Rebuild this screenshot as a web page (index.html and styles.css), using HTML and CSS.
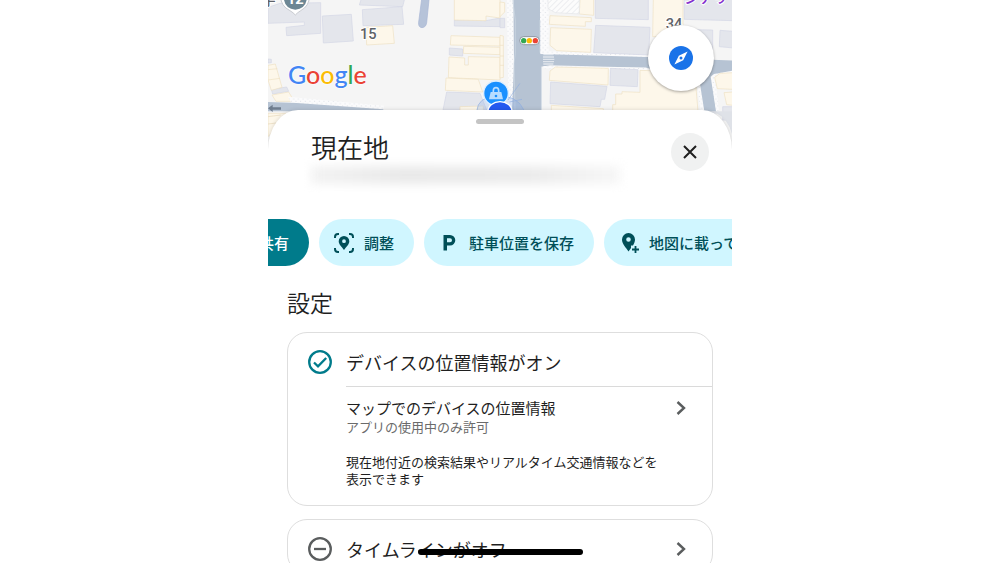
FILE: index.html
```html
<!DOCTYPE html>
<html lang="ja">
  <head>
    <meta charset="UTF-8">
    <meta name="viewport" content="width=device-width, initial-scale=1.0">
    <title>現在地</title>
    <link rel="stylesheet" href="styles.css">
  </head>
  <body>
    <div class="screen">
      <div class="map">
        <svg class="map-canvas" viewBox="0 0 1392 450" preserveAspectRatio="xMidYMin slice" aria-hidden="true">
          <defs>
            <pattern id="dots" width="14" height="14" patternUnits="userSpaceOnUse">
              <rect width="14" height="14" fill="#fbfbfc"/>
              <circle cx="3" cy="3" r="1.5" fill="#d3d7e0"/>
              <circle cx="10" cy="10" r="1.5" fill="#d3d7e0"/>
            </pattern>
            <pattern id="hatch" width="12" height="12" patternUnits="userSpaceOnUse" patternTransform="rotate(45)">
              <rect width="12" height="12" fill="#fcfcfc"/>
              <path d="M0 0V12" stroke="#dcdee4" stroke-width="3"/>
            </pattern>
          </defs>
          <rect width="1392" height="450" fill="#f5f5f5"/>

          <!-- 左側 -->
          <g transform="translate(-24 0)" stroke-width="2">
            <g fill="#e4e6ec" stroke="#d3d7e6">
              <path d="M24 22L60 10L182 8V100L80 107L78 82L133 76V66L24 70Z"/>
              <path d="M187 48L274 43L280 123L190 129Z"/>
              <path d="M304 -4H434L428 20L298 15Z"/>
              <path d="M307 29L426 20L431 73L309 77Z"/>
              <path d="M24 177L34 178V188L24 189Z"/>
              <path d="M34 268L80 261L86 274L38 282Z"/>
              <path d="M568 144L608 147V168L568 165Z"/>
              <path d="M583 60L678 62L720 54V80L583 78Z"/>
              <path d="M560 276L660 280L680 330H549Z"/>
            </g>
            <g fill="#fdf7ea" stroke="#efe1c2">
              <path d="M318 82L398 77L403 130L320 135Z"/>
              <path d="M583 -4H720V54L678 48V62L583 60Z"/>
              <path d="M573 107L720 112V138L571 135Z"/>
              <path d="M611 139L720 142V164L610 160Z"/>
              <path d="M567 171L614 174V195H625V170L720 172V240L565 233Z"/>
              <path d="M558 234L655 238L668 276L556 271Z"/>
              <path d="M24 196L46 192L66 262L34 271L24 240Z"/>
              <path d="M24 209L52 206M24 240L60 235" fill="none"/>
              <path d="M36 285L86 276L103 304L48 304Z"/>
              <path d="M600 320L670 318V334H600Z"/>
            </g>
            <path d="M84 290L372 317L370 330L94 309Z" fill="url(#dots)"/>
            <path d="M24 306L110 309L370 328V334H24Z" fill="#b6c3d3"/>
            <path d="M24 340H90L24 410Z" fill="#fdf7ea" stroke="#efe1c2"/>
            <path d="M24 350L62 345M24 372L48 369" stroke="#e6d7b8"/>
            <path d="M24 325L38 314V322H63V329H38V336Z" fill="#6f7d8e"/>
            <path d="M486 -10L476 66Q474 82 486 83Q498 82 500 68L508 -10Z" fill="#b6c3d9" stroke="#a8b5d4"/>
            <!-- 12番のピン -->
            <path d="M62 -10Q62 18 90 32Q100 38 106 45Q112 38 122 32Q148 18 148 -10Z" fill="#fff" stroke="#c8cbd0" stroke-width="3"/>
            <path d="M71 -10Q72 26 106 29Q140 26 141 -10Z" fill="#6d8794"/>
            <text x="106" y="11" class="pin-label">12</text>
            <text x="4" y="16" class="map-label map-label-jp">字</text>
            <text x="325" y="116" class="map-label">15</text>
          </g>

          <!-- 右側 -->
          <g transform="translate(696 0)" stroke-width="2">
            <path d="M20 -10H146V165L124 200V340H26Z" fill="url(#dots)"/>
            <path d="M40 -10H120V160H150L470 170V204L150 196L124 200V334H36L42 190Z" fill="#b6c3d3"/>
            <path d="M128 153L470 166V172L120 162ZM128 198L440 203V211L130 205Z" fill="url(#dots)"/>
            <path d="M440 172L700 182V212L634 230L650 340H612L592 230L440 204Z" fill="#b6c3d3"/>
            <path d="M590 250L600 252L613 334H602ZM632 230L642 222L697 212V218L646 236L657 334H648Z" fill="url(#dots)"/>
            <path d="M38 0L46 60V160L42 190L45 330M120 60V158M124 200V330" fill="none" stroke="#cfd9e4"/>
            <path d="M130 164H160M129 171H162M129 178H163M129 185H162M130 192H160" stroke="#e0e5ec" stroke-width="4"/>
            <g fill="#e4e6ec" stroke="#d3d7e6">
              <path d="M286 -4H445V59L286 55Z"/>
              <path d="M287 76L450 82L446 165L281 158Z"/>
              <path d="M553 -4H700V62L553 58Z"/>
              <path d="M520 88L638 90V150L520 148Z"/>
              <path d="M660 91L700 94V144L658 140Z"/>
              <path d="M332 205L414 209L412 260L330 256Z"/>
              <path d="M152 246L321 259L314 298H304L300 320L150 311Z"/>
              <path d="M0 55H14V83H0Z"/>
              <path d="M668 320H700V360H668Z"/>
            </g>
            <g fill="#fdf7ea" stroke="#efe1c2">
              <path d="M0 6L14 8V36L0 50ZM0 106L10 108V232L0 234Z"/>
              <path d="M0 136H10M0 168H12M0 196H12"/>
              <path d="M240 -4H281V46L238 42Z"/>
              <path d="M150 47L274 53V65H256V79L148 73Z"/>
              <path d="M152 83L274 88L272 157L170 152L150 136Z"/>
              <path d="M460 -4H549V110H458Z"/>
              <path d="M150 213L166 201L325 205L324 255L148 241Z"/>
              <path d="M420 211L540 215L586 240L594 334H338V314H347V282H366V275L420 277Z"/>
              <path d="M644 232L660 220L700 218V268L652 266Z"/>
              <path d="M672 278L700 276V316L680 314Z"/>
              <path d="M154 316L310 326V334H154Z"/>
            </g>
            <path d="M144 -4H238V42L166 38L144 26Z" fill="url(#hatch)" stroke="#e4e5e9"/>
            <path d="M600 334H700V420Q690 360 650 340Z" fill="#dfe2e8"/>
            <text x="522" y="87" class="map-label">34</text>
            <text x="640" y="8" class="map-label map-label-shop">シナリー</text>
            <!-- 信号機 -->
            <rect x="59" y="110" width="59" height="24" rx="12" fill="#fff" stroke="#6c7683" stroke-width="2"/>
            <circle cx="71" cy="122" r="8" fill="#34a853"/>
            <circle cx="88" cy="122" r="8" fill="#fbbc04"/>
            <circle cx="106" cy="122" r="8" fill="#ea4335"/>
            <!-- 現在地マーカー -->
            <path d="M-70 334Q-66 290 -14 290Q50 280 74 334Z" fill="#7aa5e8" fill-opacity=".25" stroke="#91afe0"/>
            <path d="M24 300L60 250M28 306L66 298" stroke="#91afe0" fill="none"/>
            <circle cx="-12" cy="280" r="37" fill="#1a90ff" stroke="#dfefff" stroke-width="4"/>
            <path d="M-28 276H4L9 298H-33Z" fill="#b7dcff"/>
            <path d="M-20 277V272Q-20 263 -12 263Q-4 263 -4 272V277" fill="none" stroke="#b7dcff" stroke-width="5"/>
            <circle cx="-12" cy="288" r="4" fill="#1a90ff"/>
            <ellipse cx="0" cy="334" rx="36" ry="29" fill="#2459f0" stroke="#fff" stroke-width="4"/>
          </g>
        </svg>
        <span class="logo"><span class="blue">G</span><span class="red">o</span><span class="yellow">o</span><span class="blue">g</span><span class="green">l</span><span class="red">e</span></span>
        <button class="compass" type="button" aria-label="コンパス">
          <svg width="24" height="24" viewBox="0 0 24 24">
            <circle cx="12" cy="12" r="12" fill="#1a73e8"/>
            <path d="M18.6 5.4L14.2 14.2L5.4 18.6L9.8 9.8Z" fill="#fff"/>
            <circle cx="12" cy="12" r="1.5" fill="#1a73e8"/>
          </svg>
        </button>
      </div>

      <main class="sheet">
        <div class="handle"></div>
        <header class="sheet-header">
          <div class="place">
            <h1>現在地</h1>
            <div class="address"></div>
          </div>
          <button class="close" type="button" aria-label="閉じる">
            <svg width="14" height="14" viewBox="0 0 14 14">
              <path d="M1 1L13 13M13 1L1 13" stroke="#1f1f1f" stroke-width="2"/>
            </svg>
          </button>
        </header>

        <div class="chips">
          <button class="chip chip-primary" type="button">
            <span class="chip-icon"></span>共有
          </button>
          <button class="chip" type="button">
            <svg class="chip-icon" viewBox="0 0 20 20">
              <path d="M1 5V4Q1 1 4 1H5M15 1H16Q19 1 19 4V5M19 15V16Q19 19 16 19H15M5 19H4Q1 19 1 16V15" fill="none" stroke="currentColor" stroke-width="2"/>
              <path fill-rule="evenodd" d="M10 3A5.300 5.300 0 0 0 4.700 8.300C4.700 11.500 8 14.200 10 17C12 14.200 15.300 11.500 15.300 8.300A5.300 5.300 0 0 0 10 3ZM10 6.300A1.900 1.900 0 1 1 10 10.100A1.900 1.900 0 1 1 10 6.300Z" fill="currentColor"/>
            </svg>
            調整
          </button>
          <button class="chip" type="button">
            <svg class="chip-icon" viewBox="0 0 20 20">
              <path fill-rule="evenodd" d="M4.500 2H11A5.300 5.300 0 0 1 11 12.600H8V17.500H4.500ZM8 5.300V9.300H11A2 2 0 0 0 11 5.300Z" fill="currentColor"/>
            </svg>
            駐車位置を保存
          </button>
          <button class="chip" type="button">
            <svg class="chip-icon" viewBox="0 0 20 20">
              <path fill-rule="evenodd" d="M9.500 0A6.500 6.500 0 0 0 3 6.500C3 11 7 14.500 9.500 18.500L12 15V12.500H14C15.200 10.500 16 8.600 16 6.500A6.500 6.500 0 0 0 9.500 0ZM9.500 4.200A2.300 2.300 0 1 1 9.500 8.800A2.300 2.300 0 1 1 9.500 4.200Z" fill="currentColor"/>
              <path d="M16.500 13V20M13 16.500H20" stroke="currentColor" stroke-width="1.800"/>
            </svg>
            地図に載って
          </button>
        </div>

        <section class="settings">
          <h2>設定</h2>
          <div class="card">
            <div class="card-title">
              <svg class="status" viewBox="0 0 24 24" fill="none" stroke="#007b8b" stroke-width="2.300">
                <circle cx="12" cy="12" r="10.800"/>
                <path d="M6 12.500L10 16.300L18.200 8"/>
              </svg>
              <h3>デバイスの位置情報がオン</h3>
            </div>
            <div class="card-body">
              <a class="row" href="#">
                <span class="row-title">マップでのデバイスの位置情報</span>
                <svg class="chevron" viewBox="0 0 10 14"><path d="M1.500 1L8 7L1.500 13"/></svg>
              </a>
              <p class="note">アプリの使用中のみ許可</p>
              <p class="description">現在地付近の検索結果やリアルタイム交通情報などを表示できます</p>
            </div>
          </div>
          <div class="card">
            <a class="card-title" href="#">
              <svg class="status" viewBox="0 0 24 24" fill="none" stroke="#5a5d5e" stroke-width="2.300">
                <circle cx="12" cy="12" r="10.800"/>
                <path d="M6 12H18"/>
              </svg>
              <h3 class="struck">タイムラインがオフ</h3>
              <svg class="chevron" viewBox="0 0 10 14"><path d="M1.500 1L8 7L1.500 13"/></svg>
            </a>
          </div>
        </section>
      </main>
    </div>
  </body>
</html>
```
FILE: styles.css
```css
* {
  box-sizing: border-box;
  margin: 0;
  padding: 0;
}

body {
  background-color: #fff;
  color: #1f1f1f;
  font-family: "Noto Sans CJK JP", sans-serif;
}
a {
  color: inherit;
  text-decoration: none;
}
button {
  border: none;
  font-family: inherit;
  cursor: pointer;
}
h1, h2 {
  font-weight: 350;
}
h3 {
  font-weight: 400;
}
.screen {
  max-width: 464px;
  height: 100vh;
  margin: 0 auto;
  overflow: hidden;
}

/* 地図 */
.map {
  position: relative;
  height: 150px;
}
.map-canvas {
  display: block;
  width: 100%;
  height: 100%;
}
.map-label {
  fill: #5f6368;
  stroke: #fff;
  stroke-width: 6px;
  paint-order: stroke;
  font-family: Roboto, sans-serif;
  font-size: 44px;
  font-weight: 500;
  text-anchor: middle;
}
.map-label-jp {
  font-family: "Noto Sans CJK JP", sans-serif;
  text-anchor: start;
}
.map-label-shop {
  fill: #8430ce;
  font-family: "Noto Sans CJK JP", sans-serif;
}
.pin-label {
  fill: #fff;
  font-family: Roboto, sans-serif;
  font-size: 44px;
  font-weight: 700;
  text-anchor: middle;
}
.logo {
  position: absolute;
  top: 59px;
  left: 20px;
  font-family: Lato, sans-serif;
  font-size: 25px;
  font-weight: 500;
  line-height: 30px;
  text-shadow: 0 0 2px #fff, 0 0 2px #fff;
}
.blue {
  color: #4285f4;
}
.red {
  color: #ea4335;
}
.yellow {
  color: #fbbc04;
}
.green {
  color: #34a853;
}
.compass {
  position: absolute;
  top: 25px;
  right: 18px;
  display: flex;
  align-items: center;
  justify-content: center;
  width: 66px;
  height: 66px;
  border-radius: 50%;
  background-color: #fff;
  box-shadow: 0 1px 3px rgba(0, 0, 0, 0.35);
}

/* シート */
.sheet {
  position: relative;
  margin-top: -40px;
  padding-top: 9px;
  border-radius: 30px 30px 0 0 / 40px 40px 0 0;
  background-color: #fff;
  box-shadow: 0 0 4px rgba(0, 0, 0, 0.15);
}
.handle {
  width: 48px;
  height: 5px;
  margin: 0 auto;
  border-radius: 3px;
  background-color: #c4c4c4;
}
.sheet-header {
  display: flex;
  align-items: center;
  justify-content: space-between;
  padding: 8px 23px 0 43px;
}
.place {
  flex: 1;
}
h1 {
  font-size: 26px;
  line-height: 30px;
}
/* ぼかした住所 */
.address {
  width: 310px;
  max-width: 90%;
  height: 18px;
  margin-top: 4px;
  background: linear-gradient(90deg, #f3f3f3, #e9e9e9 30%, #ebebeb 70%, #f7f7f7);
  filter: blur(5px);
}
.close {
  display: flex;
  align-items: center;
  justify-content: center;
  width: 38px;
  height: 38px;
  margin-bottom: 12px;
  border-radius: 50%;
  background-color: #f0f1f1;
}

.chips {
  display: flex;
  gap: 10px;
  margin-top: 35px;
  overflow: hidden;
}
.chip {
  display: flex;
  flex: none;
  align-items: center;
  gap: 10px;
  height: 47px;
  padding: 0 20px 0 15px;
  border-radius: 24px;
  background-color: #d0f6ff;
  color: #004f58;
  font-size: 15px;
  font-weight: 500;
}
.chip-primary {
  margin-left: -54px;
  background-color: #007b8b;
  color: #fff;
}
.chip-icon {
  width: 20px;
  height: 20px;
}

/* 設定 */
.settings {
  padding: 19px 19px 0;
}
h2 {
  font-size: 23px;
  line-height: 34px;
}
.card {
  margin-top: 13px;
  border: 1px solid #dedede;
  border-radius: 20px;
}
.card-title {
  display: flex;
  align-items: center;
  padding: 16px 26px 11px 20px;
}
.status {
  width: 24px;
  height: 24px;
  margin-right: 14px;
}
h3 {
  font-size: 18px;
  line-height: 26px;
}
.card-body {
  margin-left: 58px;
  padding: 10px 26px 18px 0;
  border-top: 1px solid #dadada;
}
.row {
  display: flex;
  align-items: center;
  justify-content: space-between;
}
.row-title {
  font-size: 15px;
  line-height: 22px;
}
.chevron {
  width: 10px;
  height: 14px;
  margin-left: auto;
  fill: none;
  stroke: #5a5d5e;
  stroke-width: 2.4px;
}
.note {
  color: #6b6b6b;
  font-size: 13px;
  line-height: 16px;
}
.description {
  margin-top: 18px;
  padding-right: 20px;
  font-size: 13px;
  line-height: 17px;
}
.struck {
  position: relative;
}
.struck::after {
  content: "";
  position: absolute;
  top: 13px;
  left: 72px;
  width: 165px;
  height: 6px;
  border-radius: 3px;
  background-color: #000;
}
```
